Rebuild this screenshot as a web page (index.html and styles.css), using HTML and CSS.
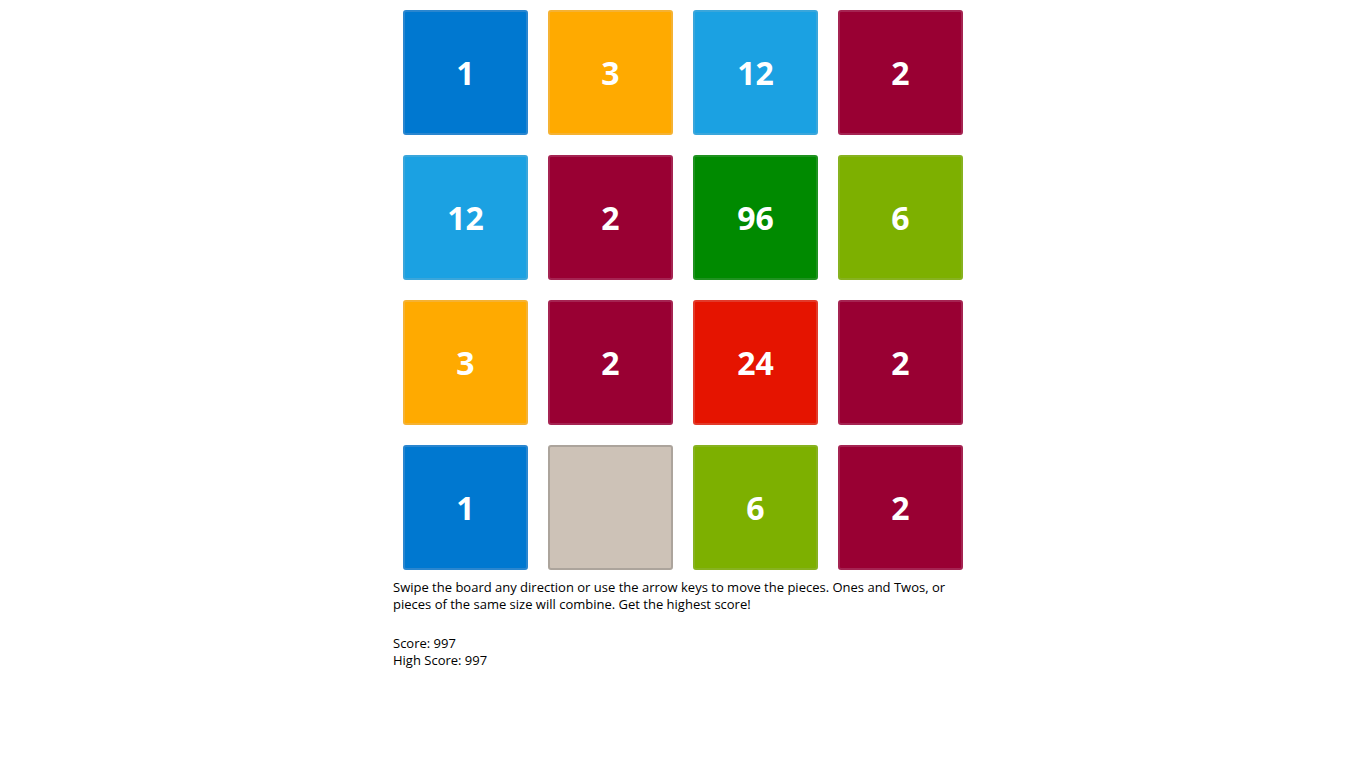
FILE: index.html
```html
<!DOCTYPE html>
<html>
<head>
<meta charset="utf-8">
<link rel="stylesheet" href="styles.css">
</head>
<body>
<main class="game">
  <div class="board">
    <div class="tile c1">1</div>
    <div class="tile c3">3</div>
    <div class="tile c12">12</div>
    <div class="tile c2">2</div>
    <div class="tile c12">12</div>
    <div class="tile c2">2</div>
    <div class="tile c96">96</div>
    <div class="tile c6">6</div>
    <div class="tile c3">3</div>
    <div class="tile c2">2</div>
    <div class="tile c24">24</div>
    <div class="tile c2">2</div>
    <div class="tile c1">1</div>
    <div class="tile empty"></div>
    <div class="tile c6">6</div>
    <div class="tile c2">2</div>
  </div>
  <p class="help">Swipe the board any direction or use the arrow keys to move the pieces. Ones and Twos, or pieces of the same size will combine. Get the highest score!</p>
  <div class="scores">
    <div>Score: 997</div>
    <div>High Score: 997</div>
  </div>
</main>
</body>
</html>
```
FILE: styles.css
```css
html, body {
  margin: 0;
  padding: 0;
  background: #ffffff;
}
body {
  font-family: "Open Sans", "Noto Sans", sans-serif;
  color: #000;
}
.game {
  width: 580px;
  margin: 0 auto;
}
.board {
  display: grid;
  grid-template-columns: repeat(4, 125px);
  grid-auto-rows: 125px;
  gap: 20px;
  padding: 10px;
}
.tile {
  box-sizing: border-box;
  border: 2px solid rgba(150, 150, 150, 0.35);
  border-radius: 3px;
  display: flex;
  align-items: center;
  justify-content: center;
  color: #fff;
  font-weight: 700;
  font-size: 32px;
  background-clip: padding-box;
}
.c1 { background: #0078d0; border-color: #2a86cf; }
.c3 { background: #ffaa00; border-color: #f5b233; }
.c12 { background: #1ba1e2; border-color: #3aa6db; }
.c2 { background: #990033; border-color: #a52452; }
.c96 { background: #008a00; border-color: #1f9220; }
.c6 { background: #7db000; border-color: #87b21f; }
.c24 { background: #e51400; border-color: #e23a2a; }
.empty { background: #cdc2b7; border-color: #aca49c; }
.help {
  margin: -1px 0 0 0;
  font-size: 13px;
  line-height: 17px;
  width: 570px;
}
.scores {
  margin-top: 22px;
  font-size: 13px;
  line-height: 17px;
}
```
